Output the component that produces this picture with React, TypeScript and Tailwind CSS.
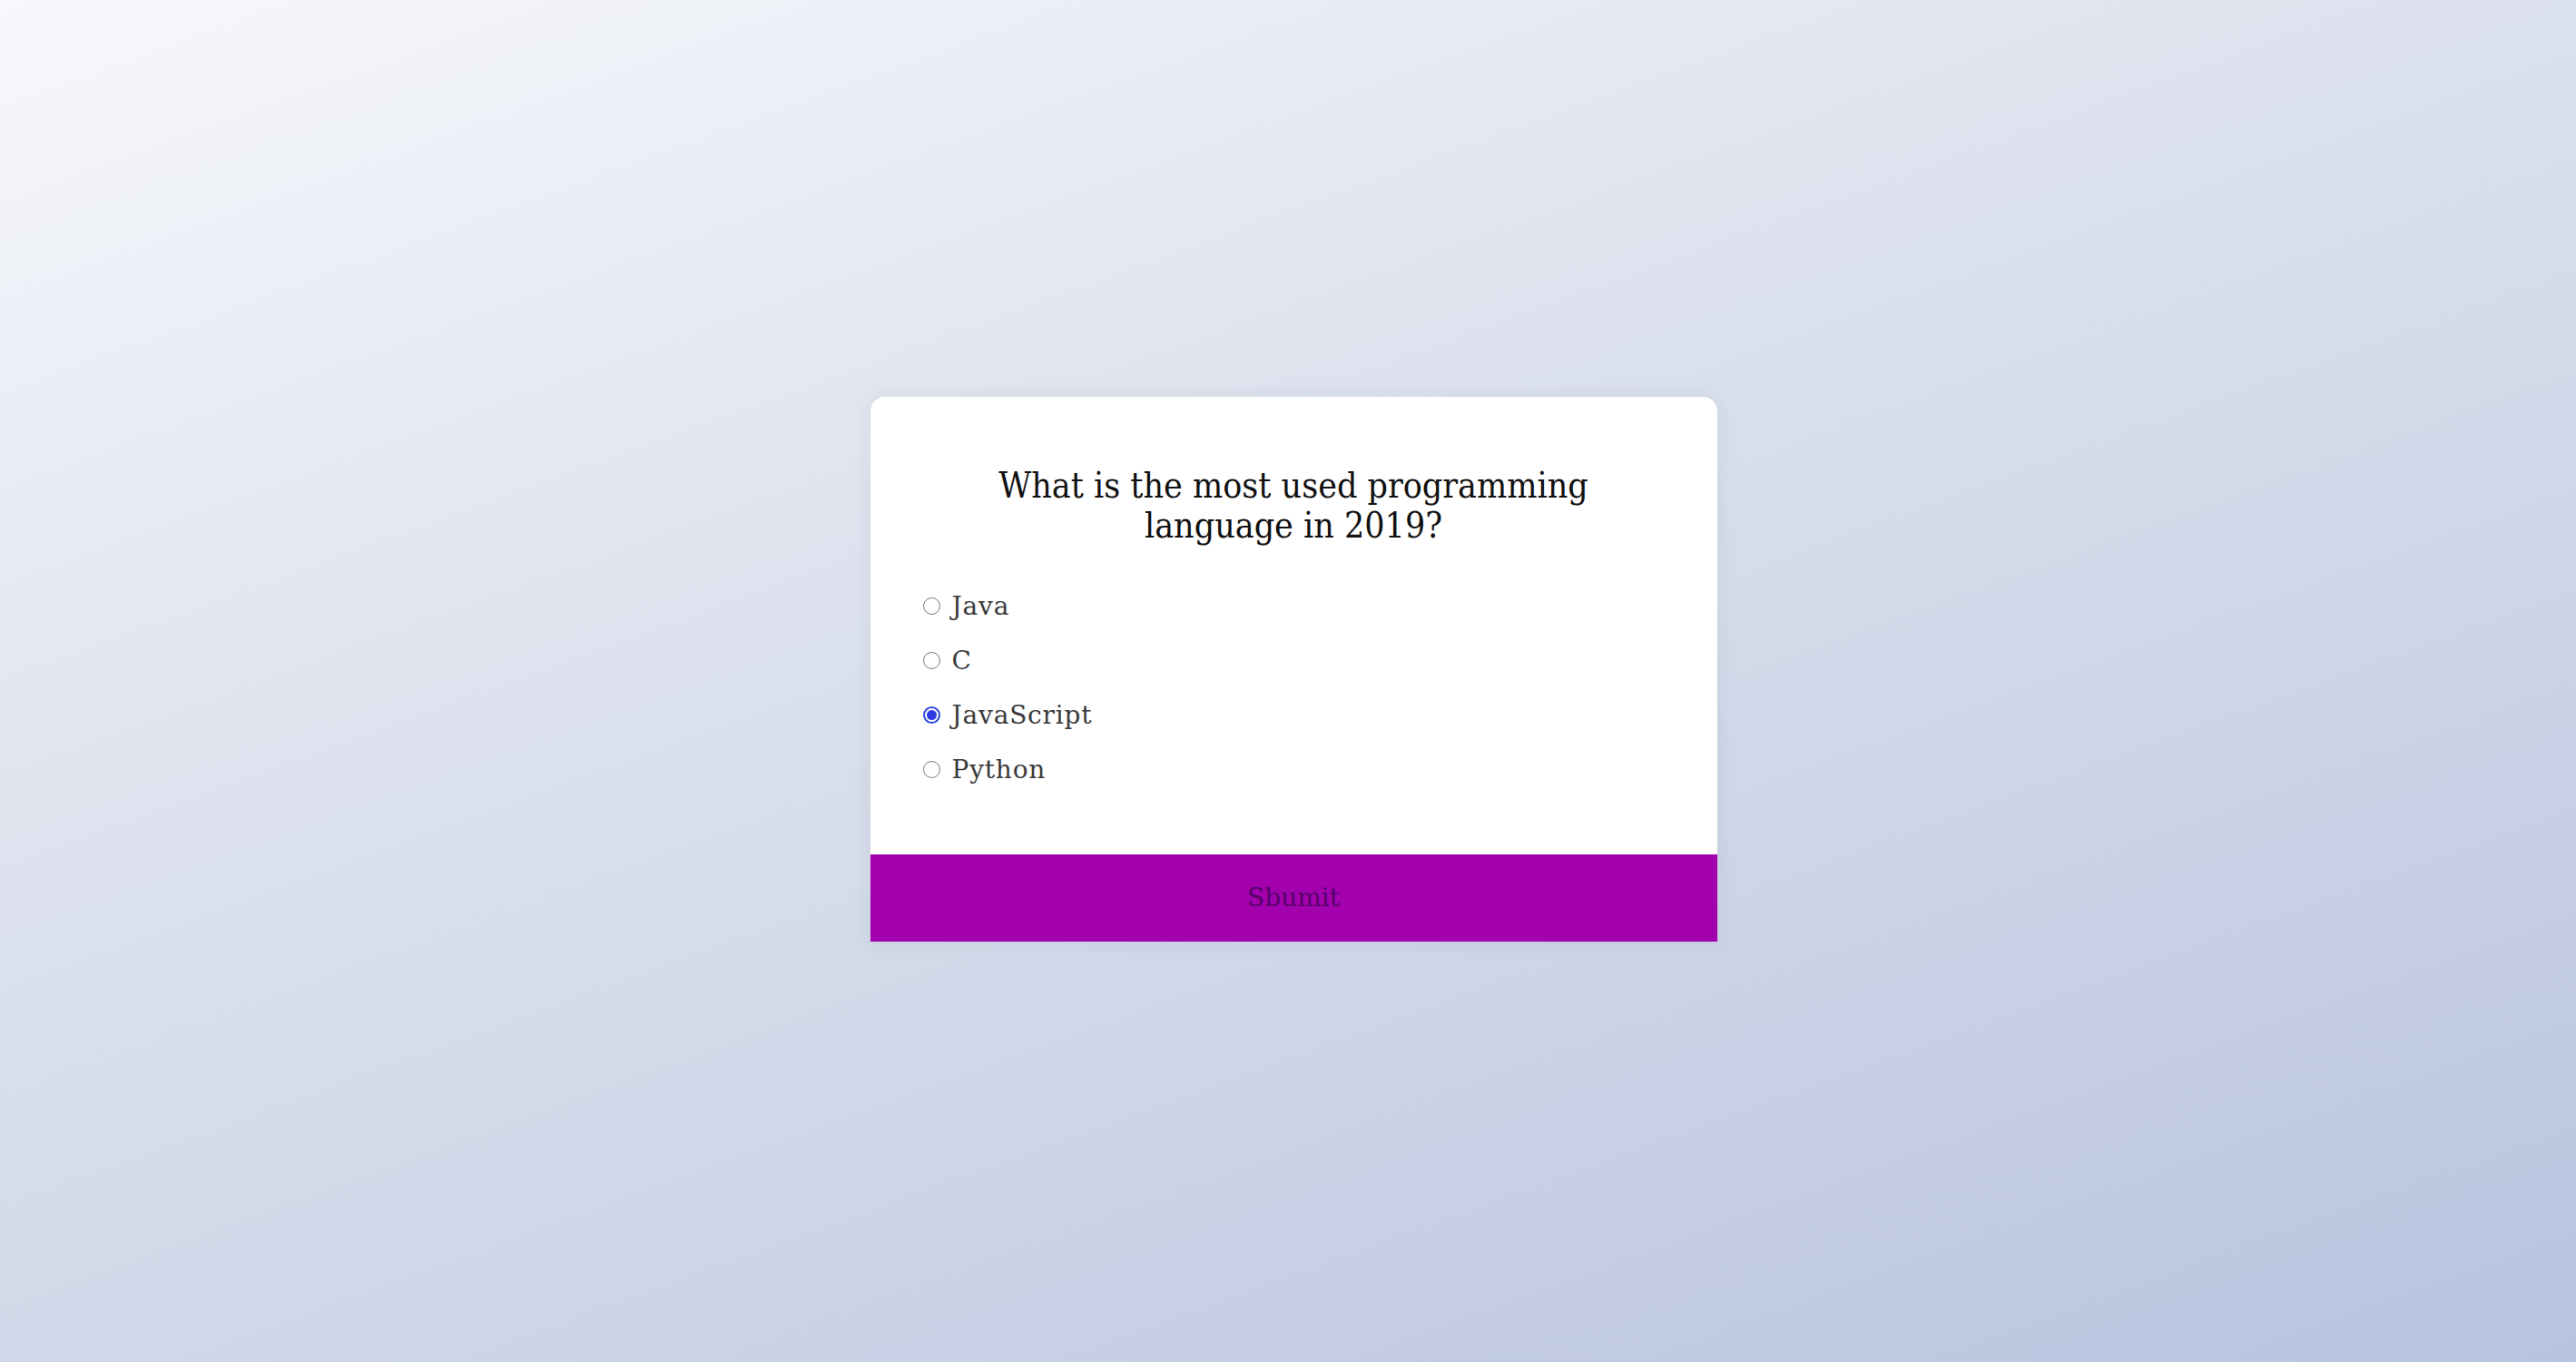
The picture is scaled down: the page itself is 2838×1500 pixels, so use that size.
import React from "react";

const options = [
  { label: "Java", checked: false },
  { label: "C", checked: false },
  { label: "JavaScript", checked: true },
  { label: "Python", checked: false },
];

function Radio({ checked }: { checked: boolean }) {
  if (checked) {
    return (
      <span className="flex h-[19px] w-[19px] items-center justify-center rounded-full border-[2px] border-[#2f48d8] bg-white">
        <span className="h-[11px] w-[11px] rounded-full bg-[#2f3be0]" />
      </span>
    );
  }
  return <span className="block h-[19px] w-[19px] rounded-full border-[1.5px] border-[#7a7a7a] bg-white" />;
}

export default function App() {
  return (
    <div className="flex h-[1500px] w-full items-center justify-center bg-[linear-gradient(160deg,#f7f8fc_0%,#dfe4ef_35%,#cdd5e7_65%,#b8c3df_100%)]">
      <div
        className="mb-[27px] ml-[12px] w-[933px] overflow-hidden rounded-t-[16px] bg-white shadow-[0_0_18px_4px_rgba(100,100,120,0.08)]"
        style={{ fontFamily: "'DejaVu Serif', 'Liberation Serif', serif" }}
      >
        <div className="px-[58px] pb-[63px] pt-[76px]">
          <h2 className="m-0 text-center text-[39px] font-normal leading-[44px] text-[#111]" style={{ fontStretch: "condensed" }}>
            What is the most used programming
            <br />
            language in 2019?
          </h2>
          <ul className="mt-[37px]">
            {options.map((o) => (
              <li key={o.label} className="flex h-[60px] items-center gap-[13px]">
                <Radio checked={o.checked} />
                <span className="text-[28px] leading-none tracking-[0.8px] text-[#3a3a3a]">
                  {o.label}
                </span>
              </li>
            ))}
          </ul>
        </div>
        <button className="flex h-[96px] w-full items-center justify-center bg-[#a300ae] text-[28px] text-[#55006a]">
          Sbumit
        </button>
      </div>
    </div>
  );
}
